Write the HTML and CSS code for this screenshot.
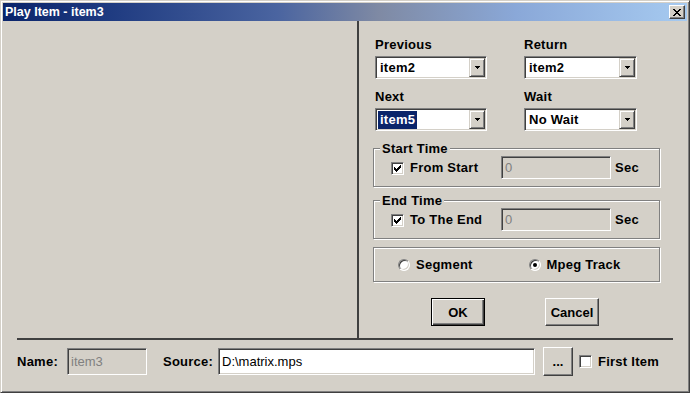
FILE: index.html
```html
<!DOCTYPE html>
<html lang="en">
<head>
    <meta charset="UTF-8">
    <meta name="viewport" content="width=device-width, initial-scale=1.0">
    <title>Play Item - item3</title>
    <link rel="stylesheet" href="styles.css">
</head>
<body>
    <div class="window">
        <div class="titlebar">
            <span class="title">Play Item - item3</span>
            <button class="close" title="Close">
                <svg width="8" height="7" viewBox="0 0 8 7" shape-rendering="crispEdges"><path d="M0 0h2v1h-2z M6 0h2v1h-2z M1 1h2v1h-2z M5 1h2v1h-2z M2 2h4v1h-4z M3 3h2v1h-2z M2 4h4v1h-4z M1 5h2v1h-2z M5 5h2v1h-2z M0 6h2v1h-2z M6 6h2v1h-2z" fill="#000"/></svg>
            </button>
        </div>

        <div class="main">
            <div class="preview"></div>

            <div class="props">
                <div class="links">
                    <div class="field">
                        <label>Previous</label>
                        <div class="combo"><span class="value">item2</span><span class="arrow"><svg width="5" height="3" viewBox="0 0 5 3" shape-rendering="crispEdges"><path d="M0 0h5v1h-1v1h-1v1h-1v-1h-1v-1h-1z" fill="#000"/></svg></span></div>
                    </div>
                    <div class="field">
                        <label>Return</label>
                        <div class="combo"><span class="value">item2</span><span class="arrow"><svg width="5" height="3" viewBox="0 0 5 3" shape-rendering="crispEdges"><path d="M0 0h5v1h-1v1h-1v1h-1v-1h-1v-1h-1z" fill="#000"/></svg></span></div>
                    </div>
                    <div class="field">
                        <label>Next</label>
                        <div class="combo"><span class="value"><span class="selected">item5</span></span><span class="arrow"><svg width="5" height="3" viewBox="0 0 5 3" shape-rendering="crispEdges"><path d="M0 0h5v1h-1v1h-1v1h-1v-1h-1v-1h-1z" fill="#000"/></svg></span></div>
                    </div>
                    <div class="field">
                        <label>Wait</label>
                        <div class="combo"><span class="value">No Wait</span><span class="arrow"><svg width="5" height="3" viewBox="0 0 5 3" shape-rendering="crispEdges"><path d="M0 0h5v1h-1v1h-1v1h-1v-1h-1v-1h-1z" fill="#000"/></svg></span></div>
                    </div>
                </div>

                <fieldset class="group">
                    <legend>Start Time</legend>
                    <div class="time-row">
                        <span class="check-label"><span class="checkbox"><svg width="7" height="7" viewBox="0 0 7 7" shape-rendering="crispEdges"><path d="M6 0h1v1h-1z M5 1h2v1h-2z M0 2h1v1h-1z M4 2h3v1h-3z M0 3h2v1h-2z M3 3h3v1h-3z M0 4h5v1h-5z M1 5h3v1h-3z M2 6h1v1h-1z" fill="#000"/></svg></span>From Start</span>
                        <span class="edit disabled time">0</span>
                        <span class="unit">Sec</span>
                    </div>
                </fieldset>

                <fieldset class="group end">
                    <legend>End Time</legend>
                    <div class="time-row">
                        <span class="check-label"><span class="checkbox"><svg width="7" height="7" viewBox="0 0 7 7" shape-rendering="crispEdges"><path d="M6 0h1v1h-1z M5 1h2v1h-2z M0 2h1v1h-1z M4 2h3v1h-3z M0 3h2v1h-2z M3 3h3v1h-3z M0 4h5v1h-5z M1 5h3v1h-3z M2 6h1v1h-1z" fill="#000"/></svg></span>To The End</span>
                        <span class="edit disabled time">0</span>
                        <span class="unit">Sec</span>
                    </div>
                </fieldset>

                <div class="group radios">
                    <span class="radio-label"><span class="radio"></span>Segment</span>
                    <span class="radio-label"><span class="radio on"></span>Mpeg Track</span>
                </div>

                <div class="buttons">
                    <button class="btn default">OK</button>
                    <button class="btn">Cancel</button>
                </div>
            </div>
        </div>

        <div class="rule"></div>

        <div class="bottom">
            <label class="name-label">Name:</label>
            <span class="edit disabled name">item3</span>
            <label class="source-label">Source:</label>
            <span class="edit source">D:\matrix.mps</span>
            <button class="btn browse">...</button>
            <span class="checkbox first"></span>
            <span class="first-label">First Item</span>
        </div>
    </div>
</body>
</html>
```

FILE: styles.css
```css
body {
    margin: 0;
    font-family: "Liberation Sans", Arial, sans-serif;
    font-size: 13px;
    font-weight: bold;
    letter-spacing: 0.25px;
    color: #000;
    background: #d4d0c8;
}
.window {
    width: 690px;
    height: 393px;
    box-sizing: border-box;
    border: 1px solid;
    border-color: #d4d0c8 #404040 #404040 #d4d0c8;
    box-shadow: inset 1px 1px #fff, inset -1px -1px #808080;
    padding: 2px;
    background: #d4d0c8;
    display: flex;
    flex-direction: column;
}
.titlebar {
    height: 18px;
    flex: 0 0 18px;
    display: flex;
    align-items: center;
    justify-content: space-between;
    padding: 0 2px 0 2px;
    background: linear-gradient(to right, #0a246a, #1e3a80 15%, #4a64a0 40%, #7f8aa4 55%, #8aa8d8 75%, #a6caf0);
}
.title {
    color: #fff;
    font-size: 12.5px;
    letter-spacing: 0;
    line-height: 18px;
}
.close {
    width: 16px;
    height: 14px;
    padding: 0;
    box-sizing: border-box;
    border: 1px solid;
    border-color: #fff #404040 #404040 #fff;
    box-shadow: inset -1px -1px #808080;
    background: #d4d0c8;
    display: flex;
    align-items: center;
    justify-content: center;
}
.main {
    display: flex;
    height: 317px;
    flex: 0 0 317px;
}
.preview {
    width: 354px;
    flex: 0 0 354px;
}
.props {
    flex: 1;
    border-left: 2px solid #404040;
    padding: 16px 0 0 16px;
}
.links {
    display: grid;
    grid-template-columns: 112px 113px;
    column-gap: 37px;
    row-gap: 10px;
}
.field label {
    display: block;
    line-height: 15px;
    margin-bottom: 4px;
}
.combo {
    height: 23px;
    box-sizing: border-box;
    border: 1px solid;
    border-color: #808080 #fff #fff #808080;
    box-shadow: inset 1px 1px #404040, inset -1px -1px #d4d0c8;
    padding: 1px;
    background: #fff;
    display: flex;
}
.combo .value {
    flex: 1;
    line-height: 19px;
    padding-left: 3px;
}
.selected {
    display: inline-block;
    background: #0a246a;
    color: #fff;
    line-height: 18px;
    padding: 0 2px;
    margin-left: -2px;
}
.arrow {
    width: 16px;
    box-sizing: border-box;
    border: 1px solid;
    border-color: #d4d0c8 #404040 #404040 #d4d0c8;
    box-shadow: inset 1px 1px #fff, inset -1px -1px #808080;
    background: #d4d0c8;
    display: flex;
    align-items: center;
    justify-content: center;
}
.group {
    margin: 10px 0 0 -2px;
    width: 287px;
    min-width: 0;
    box-sizing: border-box;
    border: 1px solid #808080;
    box-shadow: inset 1px 1px #fff, 1px 1px #fff;
    padding: 0 0 7px 6px;
}
.group.end {
    margin-top: 6px;
}
.group legend {
    padding: 0 2px;
    line-height: 15px;
    background: #d4d0c8;
}
.time-row {
    display: flex;
    align-items: center;
    height: 23px;
    margin-left: 11px;
}
.check-label {
    width: 110px;
    display: flex;
    align-items: center;
}
.checkbox {
    width: 13px;
    height: 13px;
    flex: 0 0 13px;
    box-sizing: border-box;
    border: 1px solid;
    border-color: #808080 #fff #fff #808080;
    box-shadow: inset 1px 1px #404040, inset -1px -1px #d4d0c8;
    background: #fff;
    display: flex;
    align-items: center;
    justify-content: center;
    margin: 2px 6px 0 0;
}
.edit {
    height: 27px;
    box-sizing: border-box;
    border: 1px solid;
    border-color: #808080 #fff #fff #808080;
    box-shadow: inset 1px 1px #404040, inset -1px -1px #d4d0c8;
    background: #fff;
    font-weight: normal;
    letter-spacing: 0;
    padding: 0 3px;
    display: flex;
    align-items: center;
}
.edit.disabled {
    background: #d4d0c8;
    color: #808080;
}
.edit.time {
    width: 110px;
    height: 23px;
}
.unit {
    margin-left: 4px;
}
.radios {
    margin-top: 8px;
    height: 35px;
    padding: 0 0 0 24px;
    display: flex;
    align-items: center;
}
.radio-label {
    width: 133px;
    display: flex;
    align-items: center;
}
.radio {
    width: 12px;
    height: 12px;
    box-sizing: border-box;
    border-radius: 50%;
    border: 1px solid;
    border-color: #808080 #fff #fff #808080;
    box-shadow: inset 1px 1px #404040, inset -1px -1px #d4d0c8;
    background: #fff;
    margin-right: 6px;
    display: flex;
    align-items: center;
    justify-content: center;
}
.radio.on::after {
    content: "";
    width: 4px;
    height: 4px;
    border-radius: 50%;
    background: #000;
}
.buttons {
    display: flex;
    gap: 60px;
    margin: 16px 0 0 56px;
}
.btn {
    width: 54px;
    height: 28px;
    padding: 0;
    box-sizing: border-box;
    border: 1px solid;
    border-color: #fff #404040 #404040 #fff;
    box-shadow: inset -1px -1px #808080;
    background: #d4d0c8;
    font: inherit;
    color: #000;
}
.btn.default {
    border-color: #000;
    box-shadow: inset 1px 1px #fff, inset -1px -1px #404040, inset -2px -2px #808080;
}
.rule {
    height: 2px;
    flex: 0 0 2px;
    margin: 0 14px;
    background: #404040;
}
.bottom {
    display: flex;
    align-items: center;
    padding: 7px 0 0 14px;
}
.name-label {
    width: 50px;
}
.edit.name {
    width: 80px;
}
.source-label {
    width: 55px;
    margin-left: 16px;
}
.edit.source {
    width: 317px;
}
.btn.browse {
    width: 30px;
    height: 29px;
    margin-left: 8px;
}
.checkbox.first {
    margin: 0 6px 0 6px;
}
```
